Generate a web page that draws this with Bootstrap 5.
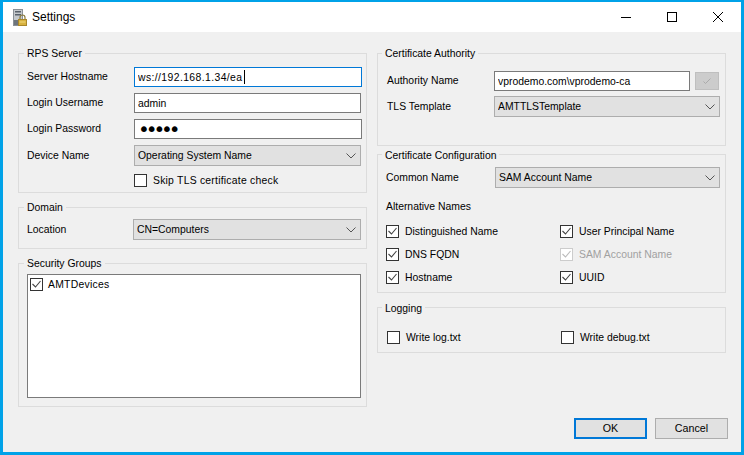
<!DOCTYPE html>
<html lang="en">
<head>
    <meta charset="UTF-8" />
    <title>Settings</title>
    <link href="https://cdn.jsdelivr.net/npm/bootstrap@5.3.0/dist/css/bootstrap.min.css" rel="stylesheet">
    <style>
        html, body { height: 100%; margin: 0; overflow: hidden; }
        body { font-family: "Liberation Sans", Arial, sans-serif; font-size: 10.4px; line-height: 14px; color: #000; background: #f0f0f0; }
        .app-window { width: 744px; height: 455px; border: solid #00a2e8; border-width: 2px 3px 3px 3px; display: flex; flex-direction: column; }
        .app-title { height: 30px; background: #fff; flex: none; padding-left: 10px; font-size: 12px; }
        .app-title svg { display: block; }
        .title-ico { margin-right: 5px; }
        .win-btn { width: 46px; height: 30px; display: flex; align-items: center; justify-content: center; }
        .app-body { flex: 1; position: relative; padding: 14px 15px 0 15px; display: flex; gap: 10px; }
        .app-col { width: 349px; flex: none; }
        fieldset.grp { border: 1px solid #dcdcdc; padding: 7px 5px 0 8px; margin: 0; }
        fieldset.grp legend { float: none; width: auto; font-size: 10.4px; line-height: 14px; padding: 0 3px; margin: 0 0 0 -3px; position: relative; top: 1px; }
        .h-rps { height: 147px; margin-bottom: 7px !important; }
        .h-dom { height: 49px; margin-bottom: 7px !important; padding-top: 5px !important; }
        .h-sec { height: 151px; padding-top: 4px !important; }
        .h-ca { height: 100px; margin-bottom: 1px !important; }
        .h-ca legend { margin-left: -4px !important; }
        .h-ca .lbl-wrap { padding-left: 1px; }
        .h-cfg { height: 146px; margin-bottom: 7px !important; padding-top: 6px !important; }
        .h-cfg legend { margin-left: -4px !important; top: 2px !important; }
        .h-log { height: 53px; padding-left: 9px !important; }
        .h-log legend { margin-left: -5px !important; top: 2px !important; }
        .lbl { width: 107px; flex: none; }
        .form-control.tb, .form-select.dd { font-size: 10.4px; line-height: 14px; border-radius: 0; color: #000; }
        .form-control.tb { height: 20px; padding: 1px 3px; border: 1px solid #7a7a7a; width: 228px; }
        .form-control.tb.active-tb { border-color: #0078d7; letter-spacing: .4px; }
        .form-select.dd { height: 21px; padding: 1px 20px 0 3px; border: 1px solid #adadad; background-color: #e1e1e1; background-image: url("data:image/svg+xml,%3csvg xmlns='http://www.w3.org/2000/svg' viewBox='0 0 10 6'%3e%3cpath d='M.5 .5L5 5l4.500-4.500' fill='none' stroke='%23555'/%3e%3c/svg%3e"); background-size: 10px 6px; background-position: right 4px center; width: 228px; }
        .form-control.tb.pw { font-family: "DejaVu Sans", sans-serif; font-size: 20px; letter-spacing: -4.1px; line-height: 18px; padding: 0 3px; }
        .tb-wrap { position: relative; }
        .tb-caret { position: absolute; left: 110px; top: 3px; width: 1px; height: 14px; background: #000; }
        .form-check-input.cb { width: 13px; height: 13px; margin: 0; border: 1px solid #333; border-radius: 0; background-color: #fff; flex: none; box-shadow: none; }
        .form-check-input.cb:checked { background-color: #fff; border-color: #333; background-size: 13px 13px; background-image: url("data:image/svg+xml,%3csvg xmlns='http://www.w3.org/2000/svg' viewBox='0 0 13 13'%3e%3cpath d='M2.500 6l3 3 5-6' fill='none' stroke='%23444' stroke-width='1.100'/%3e%3c/svg%3e"); }
        .form-check-input.cb:disabled { opacity: 1; border-color: #ccc; background-image: url("data:image/svg+xml,%3csvg xmlns='http://www.w3.org/2000/svg' viewBox='0 0 13 13'%3e%3cpath d='M2.500 6l3 3 5-6' fill='none' stroke='%23bbb' stroke-width='1.100'/%3e%3c/svg%3e"); }
        .cb-row { display: flex; align-items: center; gap: 6px; height: 14px; }
        .cb-row > span:last-child { padding-top: 1px; }
        .cb-row.skip-row { gap: 0; margin-top: 1px; }
        .cb-row.skip-row span:last-child { margin-left: 6px; letter-spacing: .23px; }
        .cb-off { color: #a0a0a0; }
        .list-box { width: 334px; height: 124px; background: #fff; border: 1px solid #7a7a7a; padding: 2px 2px; margin-top: 0; }
        .list-box .cb-row { gap: 5px; }
        .list-box .cb-row span { letter-spacing: .25px; }
        .ca-check { width: 24px; height: 18px; background: #ccc; border: 1px solid #bfbfbf; display: flex; align-items: center; justify-content: center; margin-left: 5px; }
        .btn.dlg { width: 73px; height: 21px; padding: 0; font-size: 10.7px; line-height: 17px; border-radius: 0; background: #e1e1e1; border: 1px solid #adadad; color: #000; }
        .btn.dlg.dflt { border: 2px solid #0078d7; }
        .dlg-btns { position: absolute; right: 13px; bottom: 13px; }
        .alt-grid { display: grid; grid-template-columns: 174px 1fr; row-gap: 9px; }
        .alt-head { margin: 12px 0 10px; }
        .log-grid { padding-top: 9px; }
    </style>
</head>
<body>
    <div class="app-window">
        <div class="app-title d-flex align-items-center">
            <svg class="title-ico" width="14" height="17" viewBox="0 0 14 17">
                <rect x="0.500" y="0.500" width="9" height="16" fill="#c4c8cc" stroke="#8a9096"/>
                <rect x="2" y="2" width="6" height="1.500" fill="#59616a"/>
                <rect x="2" y="5" width="6" height="1.500" fill="#59616a"/>
                <rect x="1" y="11" width="8" height="5" fill="#6e757c"/>
                <path d="M7 10V8.500a2.500 2.500 0 0 1 5 0V10" fill="none" stroke="#8a7a3a" stroke-width="1.200"/>
                <rect x="5.500" y="10.500" width="8" height="6" fill="#d8b23f" stroke="#a8862a"/>
                <rect x="6.500" y="12.500" width="6" height="1" fill="#f0d87c"/>
            </svg>
            <span>Settings</span>
            <div class="ms-auto d-flex">
                <div class="win-btn"><svg width="10" height="10"><path d="M0 5.500h10" stroke="#000"/></svg></div>
                <div class="win-btn"><svg width="10" height="10"><rect x="0.500" y="0.500" width="9" height="9" fill="none" stroke="#000"/></svg></div>
                <div class="win-btn"><svg width="10" height="10"><path d="M0 0l10 10M10 0L0 10" stroke="#000"/></svg></div>
            </div>
        </div>
        <div class="app-body">
            <div class="app-col">
                <fieldset class="grp h-rps">
                    <legend>RPS Server</legend>
                    <div class="d-flex flex-column" style="gap:6px">
                        <div class="d-flex align-items-center"><span class="lbl">Server Hostname</span><div class="tb-wrap"><input class="form-control tb active-tb" value="ws://192.168.1.34/ea"><span class="tb-caret"></span></div></div>
                        <div class="d-flex align-items-center"><span class="lbl">Login Username</span><input class="form-control tb" value="admin"></div>
                        <div class="d-flex align-items-center"><span class="lbl">Login Password</span><input class="form-control tb pw" type="password" value="admin"></div>
                        <div class="d-flex align-items-center"><span class="lbl">Device Name</span><select class="form-select dd"><option>Operating System Name</option></select></div>
                        <label class="cb-row skip-row"><span class="lbl"></span><input class="form-check-input cb" type="checkbox"><span>Skip TLS certificate check</span></label>
                    </div>
                </fieldset>
                <fieldset class="grp h-dom">
                    <legend>Domain</legend>
                    <div class="d-flex align-items-center"><span class="lbl" style="width:106px">Location</span><select class="form-select dd"><option>CN=Computers</option></select></div>
                </fieldset>
                <fieldset class="grp h-sec">
                    <legend>Security Groups</legend>
                    <div class="list-box"><label class="cb-row"><input class="form-check-input cb" type="checkbox" checked><span>AMTDevices</span></label></div>
                </fieldset>
            </div>
            <div class="app-col">
                <fieldset class="grp h-ca">
                    <legend>Certificate Authority</legend>
                    <div class="lbl-wrap d-flex flex-column" style="gap:5px;padding-top:4px">
                        <div class="d-flex align-items-center"><span class="lbl">Authority Name</span><input class="form-control tb" style="width:196px" value="vprodemo.com\vprodemo-ca"><div class="ca-check"><svg width="10" height="10"><path d="M1.500 5.500l2 2 5-5" fill="none" stroke="#aaa"/></svg></div></div>
                        <div class="d-flex align-items-center"><span class="lbl">TLS Template</span><select class="form-select dd" style="width:226px"><option>AMTTLSTemplate</option></select></div>
                    </div>
                </fieldset>
                <fieldset class="grp h-cfg">
                    <legend>Certificate Configuration</legend>
                    <div class="d-flex align-items-center"><span class="lbl" style="width:109px">Common Name</span><select class="form-select dd" style="width:225px"><option>SAM Account Name</option></select></div>
                    <div class="alt-head">Alternative Names</div>
                    <div class="alt-grid">
                        <label class="cb-row"><input class="form-check-input cb" type="checkbox" checked><span>Distinguished Name</span></label>
                        <label class="cb-row"><input class="form-check-input cb" type="checkbox" checked><span>User Principal Name</span></label>
                        <label class="cb-row"><input class="form-check-input cb" type="checkbox" checked><span>DNS FQDN</span></label>
                        <label class="cb-row cb-off"><input class="form-check-input cb" type="checkbox" checked disabled><span>SAM Account Name</span></label>
                        <label class="cb-row"><input class="form-check-input cb" type="checkbox" checked><span>Hostname</span></label>
                        <label class="cb-row"><input class="form-check-input cb" type="checkbox" checked><span>UUID</span></label>
                    </div>
                </fieldset>
                <fieldset class="grp h-log">
                    <legend>Logging</legend>
                    <div class="alt-grid log-grid">
                        <label class="cb-row"><input class="form-check-input cb" type="checkbox"><span>Write log.txt</span></label>
                        <label class="cb-row"><input class="form-check-input cb" type="checkbox"><span>Write debug.txt</span></label>
                    </div>
                </fieldset>
            </div>
            <div class="dlg-btns d-flex gap-2">
                <button class="btn dlg dflt">OK</button>
                <button class="btn dlg">Cancel</button>
            </div>
        </div>
    </div>
    <script src="https://cdn.jsdelivr.net/npm/bootstrap@5.3.0/dist/js/bootstrap.bundle.min.js"></script>
</body>
</html>
